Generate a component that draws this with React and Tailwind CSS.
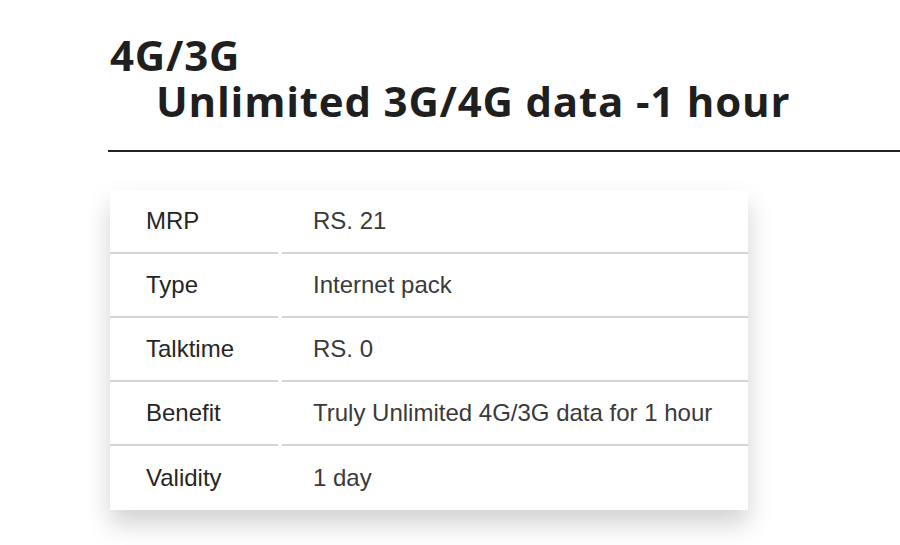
import React from 'react';

const rows = [
  { label: 'MRP', value: 'RS. 21' },
  { label: 'Type', value: 'Internet pack' },
  { label: 'Talktime', value: 'RS. 0' },
  { label: 'Benefit', value: 'Truly Unlimited 4G/3G data for 1 hour' },
  { label: 'Validity', value: '1 day' },
];

export default function App() {
  return (
    <div className="w-[900px] h-[545px] overflow-hidden bg-white">
      {/* Title */}
      <div className="pl-[110px] pt-[32px] text-[#1f1f1f]" style={{ fontFamily: '"Open Sans", sans-serif' }}>
        <h1 className="text-[42px] leading-[46px] font-bold tracking-[0.8px]">
          <span className="block">4G/3G</span>
          <span className="block pl-[46px]">Unlimited 3G/4G data -1 hour</span>
        </h1>
      </div>
      <div className="ml-[108px] mt-[26px] h-[2px] bg-[#222]" />

      {/* Details table */}
      <div className="ml-[110px] mt-[38px] w-[638px] bg-white shadow-[0_14px_24px_rgba(0,0,0,0.18)]" style={{ fontFamily: '"Liberation Sans", Arial, sans-serif' }}>
        {rows.map((row, i) => (
          <div key={row.label} className="flex h-[64px]">
            <div className={`w-[168px] flex items-center pl-[36px] text-[24px] text-[#262626] ${i < rows.length - 1 ? 'border-b-2 border-[#d4d4d4]' : ''}`}>
              {row.label}
            </div>
            <div className={`flex-1 ml-[4px] flex items-center pl-[31px] text-[24px] text-[#3a3a3a] ${i < rows.length - 1 ? 'border-b-2 border-[#d4d4d4]' : ''}`}>
              {row.value}
            </div>
          </div>
        ))}
      </div>
    </div>
  );
}
